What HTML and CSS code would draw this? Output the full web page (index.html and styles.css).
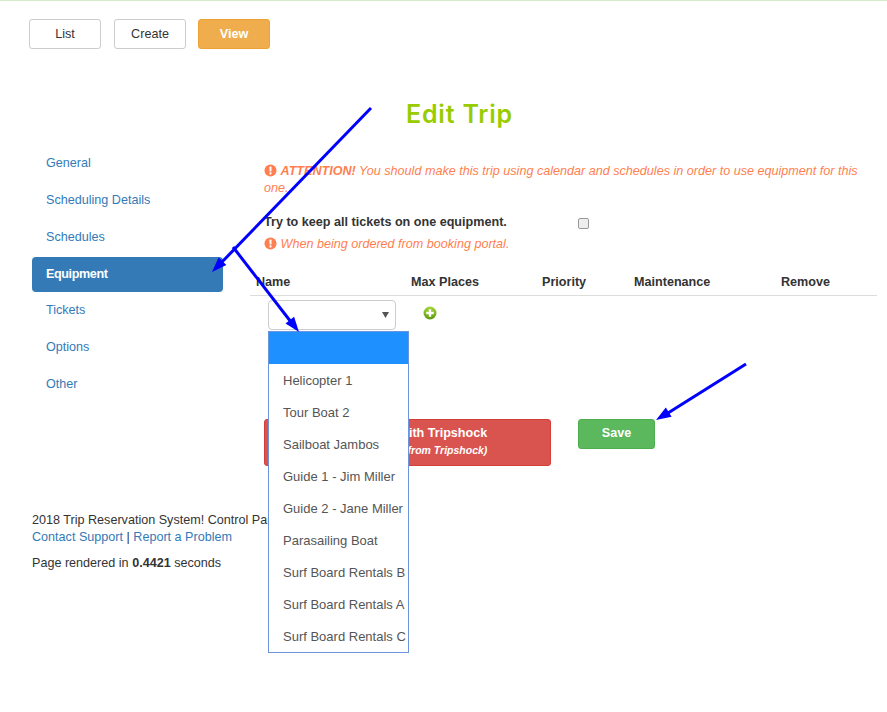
FILE: index.html
```html
<!DOCTYPE html>
<html lang="en">
<head>
<meta charset="utf-8">
<title>Edit Trip</title>
<link rel="stylesheet" href="styles.css">
</head>
<body>
<div class="toolbar">
  <a class="btn btn-default">List</a>
  <a class="btn btn-default create">Create</a>
  <a class="btn btn-warning">View</a>
</div>
<h1 class="title">Edit Trip</h1>
<div class="main">
  <nav class="sidebar">
    <a class="pill">General</a>
    <a class="pill">Scheduling Details</a>
    <a class="pill">Schedules</a>
    <a class="pill active">Equipment</a>
    <a class="pill">Tickets</a>
    <a class="pill">Options</a>
    <a class="pill">Other</a>
  </nav>
  <section class="content">
    <div class="inner">
      <p class="attention"><svg class="warn" viewBox="0 0 14 14"><circle cx="7" cy="7" r="6.5"/><rect class="warn-mark" x="5.9" y="2.8" width="2.2" height="5.2" rx="0.6"/><rect class="warn-mark" x="5.9" y="9" width="2.2" height="2.2" rx="0.5"/></svg> <b>ATTENTION!</b> You should make this trip using calendar and schedules in order to use equipment for this one.</p>
      <div class="keep-row">
        <span class="keep-label">Try to keep all tickets on one equipment.</span>
        <input class="keep-check" type="checkbox">
      </div>
      <p class="attention"><svg class="warn" viewBox="0 0 14 14"><circle cx="7" cy="7" r="6.5"/><rect class="warn-mark" x="5.9" y="2.8" width="2.2" height="5.2" rx="0.6"/><rect class="warn-mark" x="5.9" y="9" width="2.2" height="2.2" rx="0.5"/></svg> When being ordered from booking portal.</p>
    </div>
    <table class="equip">
      <thead>
        <tr><th class="c1">Name</th><th class="c2">Max Places</th><th class="c3">Priority</th><th class="c4">Maintenance</th><th class="c5">Remove</th></tr>
      </thead>
      <tbody>
        <tr>
          <td class="select-cell">
            <div class="select">
              <svg class="caret" viewBox="0 0 7 6"><path d="M0 0h7L3.500 6z"/></svg>
              <ul class="dropdown">
                <li class="selected">&nbsp;</li>
                <li>Helicopter 1</li>
                <li>Tour Boat 2</li>
                <li>Sailboat Jambos</li>
                <li>Guide 1 - Jim Miller</li>
                <li>Guide 2 - Jane Miller</li>
                <li>Parasailing Boat</li>
                <li>Surf Board Rentals B</li>
                <li>Surf Board Rentals A</li>
                <li>Surf Board Rentals C</li>
              </ul>
            </div>
          </td>
          <td class="add-cell">
            <svg class="add" viewBox="0 0 14 14">
              <defs><linearGradient id="addFill" x1="0" y1="0" x2="0" y2="1"><stop offset="0" stop-color="#a6d63c"/><stop offset="1" stop-color="#5c9a0c"/></linearGradient></defs>
              <circle cx="7" cy="7" r="6.500" fill="url(#addFill)"/>
              <path d="M5.800 3.200h2.400v2.600h2.600v2.400H8.200v2.600H5.800V8.200H3.200V5.800h2.600z" fill="#fff"/>
            </svg>
          </td>
          <td></td><td></td><td></td>
        </tr>
      </tbody>
    </table>
    <div class="actions">
      <a class="btn-sync"><b>Disconnect with Tripshock</b><small>(Unlink this trip from Tripshock)</small></a>
      <a class="btn-save">Save</a>
    </div>
  </section>
</div>
<footer class="footer">
  <div>2018 Trip Reservation System! Control Panel</div>
  <div><a>Contact Support</a> | <a>Report a Problem</a></div>
  <p class="render">Page rendered in <b>0.4421</b> seconds</p>
</footer>
<svg class="arrows" viewBox="0 0 887 712">
  <g class="arrow-line">
    <line x1="371" y1="108" x2="222" y2="262"/>
    <line x1="233" y1="247" x2="291" y2="322"/>
    <line x1="746" y1="364" x2="668" y2="413"/>
  </g>
  <g class="arrow-head">
    <polygon points="212,272 226.400,265 218.600,257.400"/>
    <polygon points="299,332 294.100,316.800 285.500,323.600"/>
    <polygon points="656,420 671.600,416.800 665.800,407.400"/>
  </g>
</svg>
</body>
</html>
```
FILE: styles.css
```css
* { box-sizing: border-box; }
html, body { margin: 0; padding: 0; }
body {
  font-family: "Liberation Sans", Arial, sans-serif;
  font-size: 12.6px;
  line-height: 17px;
  color: #333;
  background: #fff;
  border-top: 1px solid #d6eec8;
  position: relative;
  min-height: 711px;
}
a { color: #337ab7; text-decoration: none; }
p { margin: 0; }

.toolbar { display: flex; padding: 18px 0 0 29px; }
.btn {
  display: flex;
  align-items: center;
  justify-content: center;
  width: 72px;
  height: 30px;
  border-radius: 3px;
  font-size: 12.6px;
  border: 1px solid #ccc;
}
.btn-default { color: #333; background: #fff; }
.create { margin: 0 12px 0 13px; }
.btn-warning {
  color: #fff;
  font-weight: bold;
  background: #f0ad4e;
  border-color: #eea236;
}

.title {
  margin: 50px 0 16px;
  padding-left: 32px;
  text-align: center;
  font-family: Inter, sans-serif;
  font-size: 25px;
  letter-spacing: 0.8px;
  line-height: 30px;
  font-weight: 600;
  color: #99cc00;
}

.main { display: flex; padding-left: 32px; gap: 27px; }
.sidebar { width: 191px; display: flex; flex-direction: column; gap: 2px; }
.pill {
  display: block;
  height: 35px;
  line-height: 35px;
  padding: 1px 0 0 14px;
  border-radius: 4px;
}
.active {
  margin-top: 1px;
  margin-bottom: -2px;
  padding-top: 0;
  background: #337ab7;
  color: #fff;
  font-weight: bold;
  letter-spacing: -0.4px;
}

.content { width: 627px; padding-top: 18px; }
.inner { padding-left: 14px; width: 614px; }
.attention { color: #ff7f50; font-style: italic; }
.warn { width: 13px; height: 13px; vertical-align: -2px; fill: #ff7f50; }
.warn-mark { fill: #fff; }
.keep-row { display: flex; align-items: center; margin: 17px 0 5px; height: 17px; }
.keep-label { font-weight: bold; width: 314px; }
.keep-check {
  appearance: none;
  margin: 1px 0 0 0;
  width: 11px;
  height: 11px;
  background: #eee;
  border: 1px solid #999;
  border-radius: 2px;
}

.equip { border-collapse: collapse; table-layout: fixed; width: 627px; margin-top: 14px; }
.equip th {
  text-align: left;
  padding: 7px 0 4px 6px;
  border-bottom: 1px solid #ddd;
}
.c1 { width: 155px; }
.c2 { width: 131px; }
.c3 { width: 92px; }
.c4 { width: 147px; }
.c5 { width: 102px; }
.equip td { padding: 4px 0 0; vertical-align: top; }
.equip .select-cell { padding-left: 18px; }
.equip .add-cell { padding: 10px 0 0 18px; }
.select {
  position: relative;
  width: 128px;
  height: 30px;
  border: 1px solid #ccc;
  border-radius: 4px;
  background: #fff;
}
.caret { position: absolute; right: 6px; top: 11px; width: 7px; height: 6px; fill: #555; }
.add { display: block; width: 14px; height: 14px; }
.dropdown {
  position: absolute;
  left: -1px;
  top: 30px;
  width: 141px;
  margin: 0;
  padding: 0;
  list-style: none;
  border: 1px solid #6a95dc;
  background: #fff;
  z-index: 2;
}
.dropdown li {
  height: 32px;
  line-height: 32px;
  padding: 1px 0 0 14px;
  font-size: 13px;
  color: #555;
  white-space: nowrap;
}
.dropdown .selected { background: #1e90ff; }

.actions { display: flex; align-items: flex-start; gap: 27px; margin: 89px 0 0 14px; }
.btn-sync {
  display: flex;
  flex-direction: column;
  align-items: center;
  justify-content: center;
  width: 287px;
  height: 47px;
  padding-bottom: 2px;
  background: #d9534f;
  border: 1px solid #d43f3a;
  border-radius: 3px;
  color: #fff;
}
.btn-sync small { font-size: 10.5px; font-style: italic; font-weight: bold; }
.btn-save {
  display: flex;
  align-items: center;
  justify-content: center;
  width: 77px;
  height: 30px;
  padding-bottom: 2px;
  background: #5cb85c;
  border: 1px solid #4cae4c;
  border-radius: 3px;
  color: #fff;
  font-weight: bold;
}

.footer { margin-top: 46px; padding-left: 32px; }
.render { margin-top: 9px; }

.arrows { position: absolute; left: 0; top: -1px; width: 887px; height: 712px; z-index: 5; pointer-events: none; }
.arrow-line line { stroke: #0000ff; stroke-width: 3; }
.arrow-head polygon { fill: #0000ff; }
```
